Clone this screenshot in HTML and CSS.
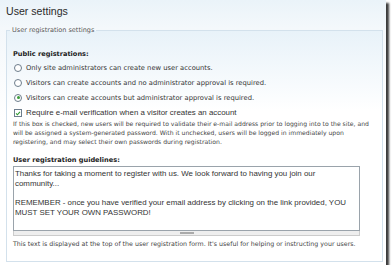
FILE: index.html
```html
<!DOCTYPE html>
<html lang="en">
<head>
    <meta charset="UTF-8">
    <title>User settings</title>
    <link rel="stylesheet" href="styles.css">
</head>
<body>
    <div class="shot">
        <h1 class="title">User settings</h1>

        <fieldset class="group">
            <legend>User registration settings</legend>

            <div class="field-label">Public registrations:</div>
            <label class="option"><span class="radio"></span>Only site administrators can create new user accounts.</label>
            <label class="option"><span class="radio"></span>Visitors can create accounts and no administrator approval is required.</label>
            <label class="option"><span class="radio checked"></span>Visitors can create accounts but administrator approval is required.</label>

            <label class="check-row"><span class="checkbox">
                <svg width="7" height="7" viewBox="0 0 7 7"><path d="M1.2 3.4 L2.8 5 L5.8 1.6" fill="none" stroke="#2f9a2f" stroke-width="1.3"/></svg>
            </span>Require e-mail verification when a visitor creates an account</label>
            <div class="description">If this box is checked, new users will be required to validate their e-mail address prior to logging into to the site, and will be assigned a system-generated password. With it unchecked, users will be logged in immediately upon registering, and may select their own passwords during registration.</div>

            <div class="field-label guide">User registration guidelines:</div>
            <div class="resizable">
                <textarea rows="6">Thanks for taking a moment to register with us. We look forward to having you join our community...

REMEMBER - once you have verified your email address by clicking on the link provided, YOU MUST SET YOUR OWN PASSWORD!</textarea>
                <div class="grippie"><span></span></div>
            </div>
            <div class="description after">This text is displayed at the top of the user registration form. It's useful for helping or instructing your users.</div>
        </fieldset>
    </div>
</body>
</html>
```

FILE: styles.css
```css
body {
    margin: 0;
    background: #fff;
}
.shot {
    width: 386px;
    height: 265px;
    overflow: hidden;
    background: linear-gradient(to bottom, #eaf3f9 0, #f4f8fb 28px, #fff 120px);
    box-shadow: 3px 3px 2px #3c3c3c;
    color: #333;
    font-family: "DejaVu Sans", Verdana, sans-serif;
}
.title {
    margin: 0;
    height: 21px;
    padding: 5px 6px 0;
    font: normal 10.6px/12px "Liberation Sans", Arial, sans-serif;
    color: #2b2b2b;
}
.group {
    margin: 0 3px 0 6px;
    padding: 0 6px 13px;
    border: 1px solid #d3e1ec;
    background: linear-gradient(to bottom, #e8f2f9 0, #fff 80px);
}
.group legend {
    margin-left: -3px;
    padding: 0 2px;
    font-size: 6.5px;
    line-height: 8px;
    color: #555;
}
.field-label {
    margin-top: 14px;
    font-weight: bold;
    font-size: 6.6px;
    line-height: 12px;
    color: #222;
}
.field-label.guide {
    margin-top: 8px;
}
.option {
    display: flex;
    align-items: center;
    height: 15px;
    font-size: 6.75px;
    color: #333;
}
.radio {
    width: 6px;
    height: 6px;
    margin: 0 4px 0 1px;
    border: 1px solid #6d7d8c;
    border-radius: 50%;
    background: #fff;
    flex: none;
    display: flex;
    align-items: center;
    justify-content: center;
}
.radio.checked::after {
    content: "";
    width: 3px;
    height: 3px;
    border-radius: 50%;
    background: #3a9c3a;
}
.check-row {
    display: flex;
    align-items: center;
    height: 13px;
    margin-top: 1px;
    font: 7.9px "Liberation Sans", Arial, sans-serif;
    color: #333;
}
.checkbox {
    width: 6px;
    height: 6px;
    margin: 0 4px 0 1px;
    border: 1px solid #6d7d8c;
    background: #fff;
    flex: none;
    display: flex;
}
.description {
    font-size: 6.1px;
    line-height: 9px;
    color: #444;
}
.description.after {
    margin-top: 3px;
    font-size: 6.3px;
}
.resizable {
    width: 347px;
}
.resizable textarea {
    display: block;
    box-sizing: border-box;
    width: 347px;
    height: 65px;
    margin: 0;
    padding: 2px 1px;
    border: 1px solid #9aa3ab;
    resize: none;
    overflow: hidden;
    font: 7.9px/9.7px "Liberation Sans", Arial, sans-serif;
    color: #333;
    background: #fff;
}
.grippie {
    height: 4px;
    background: #eee;
    border: 1px solid #ccc;
    border-top: none;
    display: flex;
    justify-content: center;
    align-items: center;
}
.grippie span {
    width: 14px;
    height: 2px;
    border-top: 1px solid #aaa;
    border-bottom: 1px solid #aaa;
    box-sizing: border-box;
}
```
